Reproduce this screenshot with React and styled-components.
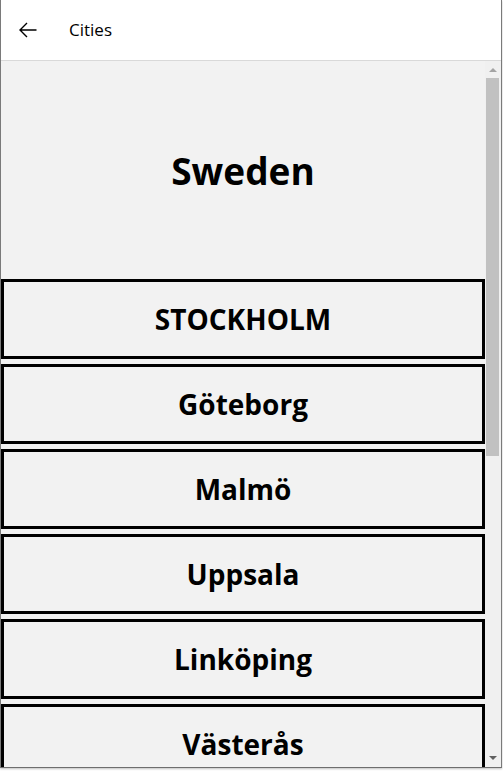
import React from "react";
import styled, { createGlobalStyle } from "styled-components";

const Global = createGlobalStyle`
  html, body { margin: 0; padding: 0; background: #ffffff; }
  body { font-family: "Open Sans", "Noto Sans", sans-serif; overflow: hidden; }
  * { box-sizing: border-box; }
`;

const Frame = styled.div`
  width: 503px;
  height: 771px;
  display: flex;
  flex-direction: column;
  background: #ffffff;
`;

const Window = styled.div`
  width: 502px;
  height: 768px;
  display: flex;
  flex-direction: column;
  border-left: 1px solid #7a7a7a;
  border-right: 1px solid #7a7a7a;
  border-bottom: 1px solid #6e6e6e;
  box-shadow: 0 1px 2px rgba(0,0,0,0.25);
`;

const Header = styled.header`
  height: 61px;
  flex: none;
  display: flex;
  align-items: center;
  background: #ffffff;
  border-bottom: 1px solid #d9d9d9;
  padding-left: 18px;
`;

const BackButton = styled.button`
  width: 18px;
  height: 16px;
  padding: 0;
  border: 0;
  background: transparent;
  display: flex;
  align-items: center;
  justify-content: center;
  margin-right: 32px;
  margin-top: -1px;
`;

const Title = styled.span`
  font-size: 17px;
  color: #000000;
  margin-top: -2px;
`;

const Body = styled.div`
  flex: 1;
  display: flex;
  min-height: 0;
  background: #f2f2f2;
`;

const Content = styled.div`
  flex: 1;
  overflow: hidden;
  display: flex;
  flex-direction: column;
  gap: 5px;
`;

const Hero = styled.div`
  height: 213px;
  flex: none;
  display: flex;
  align-items: center;
  justify-content: center;
  padding-top: 5px;
`;

const Heading = styled.h1`
  margin: 0;
  font-size: 37px;
  font-weight: 700;
  color: #000;
`;

const CityButton = styled.button`
  flex: none;
  height: 80px;
  width: 100%;
  border: 3px solid #000000;
  background: #f2f2f2;
  font-family: inherit;
  font-size: 28px;
  font-weight: 700;
  color: #000;
  display: flex;
  align-items: center;
  justify-content: center;
  padding: 0;
`;

const Scrollbar = styled.div`
  width: 16px;
  flex: none;
  display: flex;
  flex-direction: column;
  background: #f0f0f0;
`;

const Arrow = styled.div`
  height: 17px;
  flex: none;
  display: flex;
  align-items: center;
  justify-content: center;
`;

const Track = styled.div`
  flex: 1;
  padding: 0 2px 0 1px;
`;

const Thumb = styled.div`
  height: 378px;
  background: #c1c1c1;
`;

const cities = ["STOCKHOLM", "Göteborg", "Malmö", "Uppsala", "Linköping", "Västerås"];

export default function App() {
  return (
    <Frame>
      <Global />
      <Window>
        <Header>
          <BackButton aria-label="Back">
            <svg width="18" height="16" viewBox="0 0 18 16" fill="none" stroke="#000" strokeWidth="1.4">
              <path d="M17.5 8H1.2M8 1L1 8l7 7" />
            </svg>
          </BackButton>
          <Title>Cities</Title>
        </Header>
        <Body>
          <Content>
            <Hero>
              <Heading>Sweden</Heading>
            </Hero>
            {cities.map((c) => (
              <CityButton key={c}>{c}</CityButton>
            ))}
          </Content>
          <Scrollbar>
            <Arrow>
              <svg width="8" height="5" viewBox="0 0 8 5"><path d="M0 5L4 1L8 5Z" fill="#a3a3a3" /></svg>
            </Arrow>
            <Track>
              <Thumb />
            </Track>
            <Arrow>
              <svg width="8" height="5" viewBox="0 0 8 5"><path d="M0 0L4 4L8 0Z" fill="#606060" /></svg>
            </Arrow>
          </Scrollbar>
        </Body>
      </Window>
    </Frame>
  );
}
